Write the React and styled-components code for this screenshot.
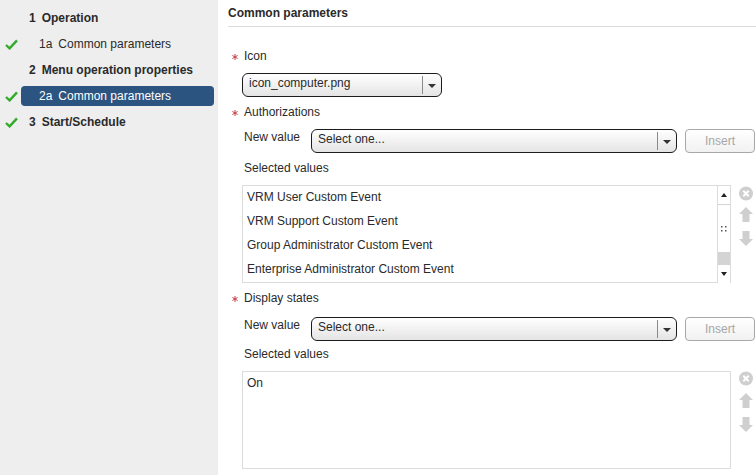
import React from "react"
import styled, { createGlobalStyle } from "styled-components"

const Global = createGlobalStyle`
  html, body { margin: 0; padding: 0; background: #fff; }
  body { font-family: "Liberation Sans", Arial, sans-serif; font-size: 12px; color: #2a2a2a; }
`

const Page = styled.div`
  display: flex;
  width: 756px;
  height: 475px;
  overflow: hidden;
`

const Sidebar = styled.nav`
  width: 218px;
  flex: none;
  background: #eeeeee;
  padding-top: 5px;
  box-sizing: border-box;
`

const StepRow = styled.div`
  display: flex;
  align-items: center;
  height: 26px;
  padding-left: 5px;
`

const CheckSlot = styled.span`
  display: flex;
  width: 16px;
  flex: none;
`

const StepLabel = styled.div`
  display: flex;
  align-items: center;
  width: 193px;
  height: 20px;
  box-sizing: border-box;
  border-radius: 4px;
  padding-left: ${(p) => (p.$sub ? "18px" : "8px")};
  font-weight: ${(p) => (p.$sub ? "normal" : "bold")};
  background: ${(p) => (p.$active ? "#2b5480" : "transparent")};
  color: ${(p) => (p.$active ? "#fff" : "#2a2a2a")};
`

const StepNum = styled.span`
  margin-right: 6px;
`

const Main = styled.main`
  flex: 1;
  padding-left: 10px;
  min-width: 0;
`

const Title = styled.h2`
  margin: 0;
  height: 26px;
  line-height: 26px;
  font-size: 12px;
  font-weight: bold;
  border-bottom: 1px solid #dcdcdc;
`

const Content = styled.div`
  padding-left: 4px;
`

const FieldLabel = styled.div`
  display: flex;
  align-items: center;
  height: 16px;
  margin-top: ${(p) => p.$top}px;
  font-size: 12px;
`

const Star = styled.svg`
  width: 6px;
  height: 6px;
  margin-right: 6px;
  flex: none;
  position: relative;
  top: 1px;
`

const Indented = styled.div`
  margin-left: 12px;
  margin-top: ${(p) => p.$top || 0}px;
  line-height: 16px;
`

const ValueRow = styled.div`
  display: flex;
  align-items: flex-start;
  margin-left: 12px;
  margin-top: ${(p) => p.$top}px;
`

const RowLabel = styled.span`
  width: 67px;
  flex: none;
  line-height: 16px;
`

const Select = styled.div`
  display: flex;
  align-items: center;
  width: ${(p) => p.$width}px;
  height: 24px;
  box-sizing: border-box;
  border: 1px solid #1c1c1c;
  border-radius: 6px;
  background: linear-gradient(#ffffff, #e4e4e4);
  padding-left: 6px;
  margin-top: ${(p) => p.$top || 0}px;
  margin-left: ${(p) => p.$left || 0}px;
`

const SelectText = styled.span`
  flex: 1;
  padding-bottom: 4px;
`

const SelectArrow = styled.span`
  width: 18px;
  height: 18px;
  flex: none;
  border-left: 1px solid #8a8a8a;
  display: flex;
  align-items: center;
  justify-content: center;
  &::after {
    content: "";
    border-left: 4px solid transparent;
    border-right: 4px solid transparent;
    border-top: 4px solid #333;
    margin-top: 2px;
  }
`

const InsertButton = styled.button`
  width: 70px;
  height: 24px;
  margin-left: 8px;
  padding: 0;
  border: 1px solid #a8a8a8;
  border-radius: 4px;
  background: linear-gradient(#ffffff, #f1f1f1);
  font: 12px "Liberation Sans", Arial, sans-serif;
  color: #a6a6a6;
`

const ListRow = styled.div`
  display: flex;
  margin-top: 9px;
  margin-left: 10px;
`

const ListBox = styled.div`
  position: relative;
  width: 489px;
  height: 98px;
  box-sizing: border-box;
  border: 1px solid #dcdcdc;
  background: #fff;
  padding: ${(p) => (p.$plain ? "4px" : "0 4px")};
  line-height: ${(p) => (p.$plain ? "14px" : "normal")};
`

const ListItem = styled.div`
  height: 24px;
  line-height: 22px;
`

const ScrollBar = styled.div`
  position: absolute;
  top: 0;
  right: 0;
  bottom: 0;
  width: 12px;
  display: flex;
  flex-direction: column;
  border-left: 1px solid #dcdcdc;
  background: #d4d4d4;
`

const ScrollEnd = styled.div`
  height: 18px;
  flex: none;
  background: #fff;
  display: flex;
  align-items: center;
  justify-content: center;
  &::after {
    content: "";
    border-left: 3px solid transparent;
    border-right: 3px solid transparent;
    ${(p) => (p.$up ? "border-bottom: 4px solid #222;" : "border-top: 4px solid #222;")}
  }
`

const ScrollThumb = styled.div`
  height: 47px;
  flex: none;
  margin-top: 1px;
  margin-bottom: 13px;
  background: #fff;
  display: flex;
  align-items: center;
  justify-content: center;
`

const Grip = styled.svg`
  width: 6px;
  height: 6px;
`

const Tools = styled.div`
  display: flex;
  flex-direction: column;
  align-items: center;
  width: 14px;
  margin-left: 8px;
  padding-top: ${(p) => p.$top || 0}px;
`

const ToolIcon = styled.svg`
  display: block;
  width: 14px;
  height: 15px;
  margin-top: ${(p) => p.$top || 0}px;
`

const Check = () => (
  <svg width="13" height="11" viewBox="0 0 13 11">
    <path d="M1 6 L4.6 9.4 L12 1.4" fill="none" stroke="#35ab2c" strokeWidth="2.4" />
  </svg>
)

const Asterisk = () => (
  <Star viewBox="0 0 6 6">
    <path d="M3 0V6M0.4 1.5L5.6 4.5M0.4 4.5L5.6 1.5" stroke="#c8404a" strokeWidth="1" />
  </Star>
)

const ToolColumn = ({ top, gap }) => (
  <Tools $top={top}>
    <ToolIcon viewBox="0 0 14 15">
      <circle cx="7" cy="7.5" r="7" fill="#cfcfcf" />
      <path d="M4.3 4.8L9.7 10.2M9.7 4.8L4.3 10.2" stroke="#fff" strokeWidth="2" />
    </ToolIcon>
    <ToolIcon viewBox="0 0 14 15" $top={gap}>
      <path d="M7 0L14 7H10.5V15H3.5V7H0Z" fill="#cfcfcf" />
    </ToolIcon>
    <ToolIcon viewBox="0 0 14 15" $top={9}>
      <path d="M7 15L14 8H10.5V0H3.5V8H0Z" fill="#cfcfcf" />
    </ToolIcon>
  </Tools>
)

const steps = [
  { num: "1", text: "Operation" },
  { num: "1a", text: "Common parameters", sub: true, done: true },
  { num: "2", text: "Menu operation properties" },
  { num: "2a", text: "Common parameters", sub: true, done: true, active: true },
  { num: "3", text: "Start/Schedule", done: true },
]

const values = [
  "VRM User Custom Event",
  "VRM Support Custom Event",
  "Group Administrator Custom Event",
  "Enterprise Administrator Custom Event",
]

const NewValue = ({ top }) => (
  <ValueRow $top={top}>
    <RowLabel>New value</RowLabel>
    <Select $width={366}>
      <SelectText>Select one...</SelectText>
      <SelectArrow />
    </Select>
    <InsertButton disabled>Insert</InsertButton>
  </ValueRow>
)

export default function App() {
  return (
    <Page>
      <Global />
      <Sidebar>
        {steps.map((s, i) => (
          <StepRow key={i}>
            <CheckSlot>{s.done && <Check />}</CheckSlot>
            <StepLabel $sub={s.sub} $active={s.active}>
              <StepNum>{s.num}</StepNum>
              {s.text}
            </StepLabel>
          </StepRow>
        ))}
      </Sidebar>
      <Main>
        <Title>Common parameters</Title>
        <Content>
          <FieldLabel $top={21}><Asterisk />Icon</FieldLabel>
          <Select $width={200} $top={9} $left={10}>
            <SelectText>icon_computer.png</SelectText>
            <SelectArrow />
          </Select>

          <FieldLabel $top={7}><Asterisk />Authorizations</FieldLabel>
          <NewValue top={9} />
          <Indented $top={7}>Selected values</Indented>
          <ListRow>
            <ListBox>
              {values.map((v) => <ListItem key={v}>{v}</ListItem>)}
              <ScrollBar>
                <ScrollEnd $up />
                <ScrollThumb>
                  <Grip viewBox="0 0 6 6">
                    <path d="M0 0h1.5v1.5H0zM4 0h1.5v1.5H4zM0 4h1.5v1.5H0zM4 4h1.5v1.5H4z" fill="#555" />
                  </Grip>
                </ScrollThumb>
                <ScrollEnd />
              </ScrollBar>
            </ListBox>
            <ToolColumn top={1} gap={6} />
          </ListRow>

          <FieldLabel $top={7}><Asterisk />Display states</FieldLabel>
          <NewValue top={11} />
          <Indented $top={5}>Selected values</Indented>
          <ListRow>
            <ListBox $plain>On</ListBox>
            <ToolColumn gap={7} />
          </ListRow>
        </Content>
      </Main>
    </Page>
  )
}
